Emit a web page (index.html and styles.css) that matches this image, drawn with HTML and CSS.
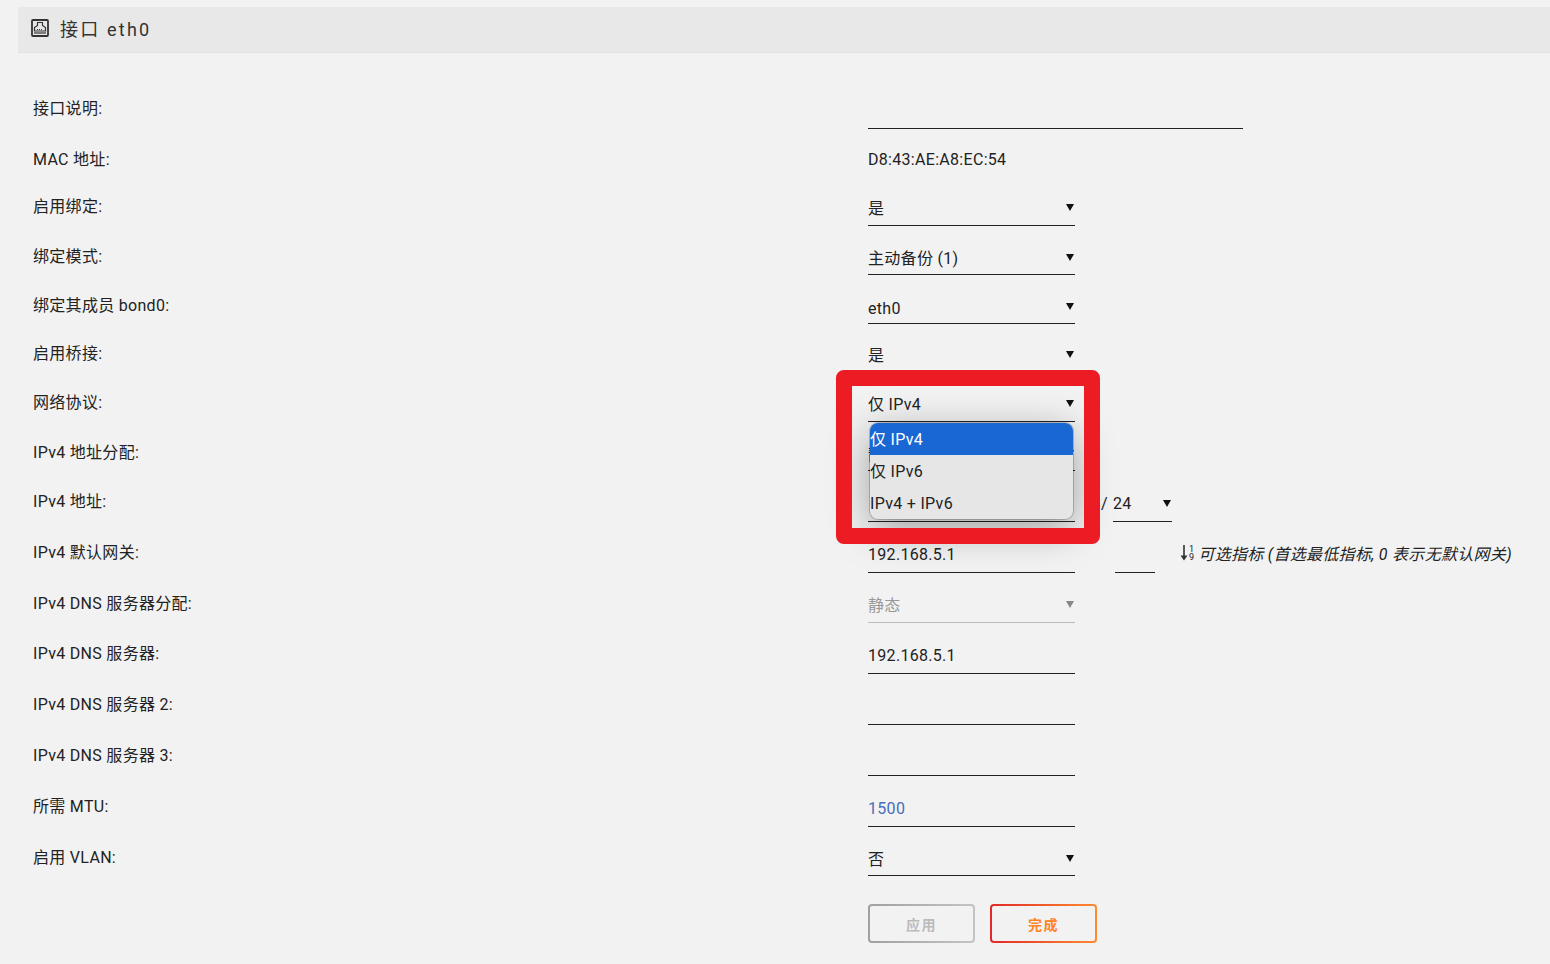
FILE: index.html
```html
<!DOCTYPE html>
<html lang="en">
<head>
    <meta charset="UTF-8">
    <title>接口 eth0</title>
    <link rel="stylesheet" href="styles.css">
</head>
<body>
    <div class="title">
        <svg class="title-icon" width="18" height="18" viewBox="0 0 18 18">
            <rect x="1" y="1" width="16" height="16" rx="1" fill="none" stroke="#333" stroke-width="1.8"/>
            <path d="M3.5 12V8.5L6.5 6.5V3.5H11.5V6.5L14.5 8.5V12Z" fill="none" stroke="#333" stroke-width="1.2"/>
            <path d="M6 10.5H12" stroke="#333" stroke-width="1.2" stroke-dasharray="1 1"/>
            <path d="M3 14H15" stroke="#333" stroke-width="1.2"/>
        </svg>
        <span class="title-text">接口 eth0</span>
    </div>

    <div class="form">
        <div class="row h51"><div class="label">接口说明:</div><div class="field"><div class="input wide"></div></div></div>
        <div class="row h47"><div class="label">MAC 地址:</div><div class="field"><div class="plain">D8:43:AE:A8:EC:54</div></div></div>
        <div class="row h50"><div class="label">启用绑定:</div><div class="field"><div class="select">是</div></div></div>
        <div class="row h49"><div class="label">绑定模式:</div><div class="field"><div class="select short">主动备份 (1)</div></div></div>
        <div class="row h48"><div class="label">绑定其成员 bond0:</div><div class="field"><div class="select short low">eth0</div></div></div>
        <div class="row h49"><div class="label">启用桥接:</div><div class="field"><div class="select short">是</div></div></div>
        <div class="row h50">
            <div class="label">网络协议:</div>
            <div class="field">
                <div class="select">仅 IPv4</div>
                <div class="popup">
                    <div class="option active">仅 IPv4</div>
                    <div class="option">仅 IPv6</div>
                    <div class="option">IPv4 + IPv6</div>
                </div>
                <div class="highlight"></div>
            </div>
        </div>
        <div class="row h49"><div class="label">IPv4 地址分配:</div><div class="field"><div class="select short">静态</div></div></div>
        <div class="row h51">
            <div class="label">IPv4 地址:</div>
            <div class="field">
                <div class="input"></div>
                <span class="slash">/</span>
                <div class="select mask">24</div>
            </div>
        </div>
        <div class="row h51">
            <div class="label">IPv4 默认网关:</div>
            <div class="field">
                <div class="input">192.168.5.1</div>
                <div class="input metric"></div>
                <div class="hint">
                    <svg width="8" height="16" viewBox="0 0 8 16"><path d="M4 0V11" stroke="#333" stroke-width="1.6"/><path d="M0.5 10.5H7.5L4 15.5Z" fill="#333"/></svg>
                    <span class="digits"><span>1</span><span>9</span></span>
                    <em>可选指标 (首选最低指标, 0 表示无默认网关)</em>
                </div>
            </div>
        </div>
        <div class="row h50"><div class="label">IPv4 DNS 服务器分配:</div><div class="field"><div class="select disabled">静态</div></div></div>
        <div class="row h51"><div class="label">IPv4 DNS 服务器:</div><div class="field"><div class="input">192.168.5.1</div></div></div>
        <div class="row h51"><div class="label">IPv4 DNS 服务器 2:</div><div class="field"><div class="input"></div></div></div>
        <div class="row h51"><div class="label">IPv4 DNS 服务器 3:</div><div class="field"><div class="input"></div></div></div>
        <div class="row h51"><div class="label">所需 MTU:</div><div class="field"><div class="input blue">1500</div></div></div>
        <div class="row h47"><div class="label">启用 VLAN:</div><div class="field"><div class="select short">否</div></div></div>
        <div class="buttons">
            <button class="btn btn-off">应用</button>
            <button class="btn btn-done">完成</button>
        </div>
    </div>
</body>
</html>
```

FILE: styles.css
```css
html, body {
    margin: 0;
    padding: 0;
}
body {
    font-family: Roboto, "Noto Sans CJK SC", sans-serif;
    font-size: 16px;
    letter-spacing: .3px;
    color: #222;
    background-color: #f2f2f2;
    height: 964px;
    overflow: hidden;
}

.title {
    display: flex;
    align-items: center;
    gap: 11px;
    height: 45px;
    margin: 7px 0 0 18px;
    padding-left: 13px;
    background-color: #e8e8e8;
    border-bottom: 1px solid #e3e3e3;
    font-size: 18px;
    letter-spacing: 2.2px;
    color: #333;
}
.title-icon {
    margin-top: -3px;
}
.title-text {
    margin-top: -3px;
}

.form {
    padding: 44px 0 0 33px;
}
.row {
    display: flex;
}
.h47 { height: 47px; }
.h48 { height: 48px; }
.h49 { height: 49px; }
.h50 { height: 50px; }
.h51 { height: 51px; }

.label {
    width: 835px;
    line-height: 24px;
}
.field {
    position: relative;
    display: flex;
    align-items: flex-start;
}
.plain {
    line-height: 24px;
}
.input, .select {
    position: relative;
    box-sizing: border-box;
    width: 207px;
    height: 32px;
    line-height: 28px;
    border-bottom: 1px solid #222;
}
.select {
    height: 31px;
}
.select.short {
    height: 30px;
    line-height: 27px;
}
.select.low {
    line-height: 29px;
}
.select::after {
    content: "";
    position: absolute;
    right: 1px;
    top: 9px;
    border-left: 4px solid transparent;
    border-right: 4px solid transparent;
    border-top: 7px solid #111;
}
.wide {
    width: 375px;
}
.select.mask {
    width: 59px;
    height: 32px;
}
.mask::after {
    top: 10px;
}
.slash {
    margin-left: 26px;
    margin-right: 5px;
    line-height: 28px;
}
.metric {
    width: 40px;
    margin-left: 40px;
}
.hint {
    display: flex;
    align-items: center;
    height: 24px;
    margin-left: 25px;
    white-space: nowrap;
}
.hint em {
    margin-left: 4px;
}
.digits {
    display: flex;
    flex-direction: column;
    font-size: 9px;
    line-height: 8px;
    margin-left: 1px;
}
.disabled {
    color: #999;
    border-bottom-color: #bbb;
}
.disabled::after {
    border-top-color: #888;
}
.blue {
    color: #486dba;
}

/* open dropdown */
.popup {
    position: absolute;
    z-index: 2;
    top: 32px;
    left: 2px;
    width: 203px;
    height: 96px;
    overflow: hidden;
    background-color: #e6e6e6;
    border-radius: 8px;
    box-shadow: 0 0 0 1px rgba(0, 0, 0, .2), 0 10px 40px rgba(0, 0, 0, .35);
}
.option {
    height: 32px;
    line-height: 34px;
}
.option.active {
    background-color: #1967d2;
    color: #fff;
}

/* red annotation frame */
.highlight {
    position: absolute;
    z-index: 3;
    top: -21px;
    left: -32px;
    box-sizing: border-box;
    width: 264px;
    height: 174px;
    border: 16px solid #ed1c24;
    border-radius: 8px;
}

.buttons {
    display: flex;
    gap: 15px;
    margin: 11px 0 0 835px;
}
.btn {
    box-sizing: border-box;
    width: 107px;
    height: 39px;
    border: 2px solid transparent;
    border-radius: 4px;
    font-family: inherit;
    font-size: 14px;
    font-weight: bold;
    letter-spacing: 1.5px;
    padding: 0 6px;
}
.btn-off {
    color: #bbb;
    background: linear-gradient(#f2f2f2, #f2f2f2) padding-box, linear-gradient(90deg, #a0a0a0, #c4c4c4) border-box;
}
.btn-done {
    background: linear-gradient(#f2f2f2, #f2f2f2) padding-box, linear-gradient(90deg, #e22828, #ff8c2f) border-box;
    color: #ff8327;
}
```
